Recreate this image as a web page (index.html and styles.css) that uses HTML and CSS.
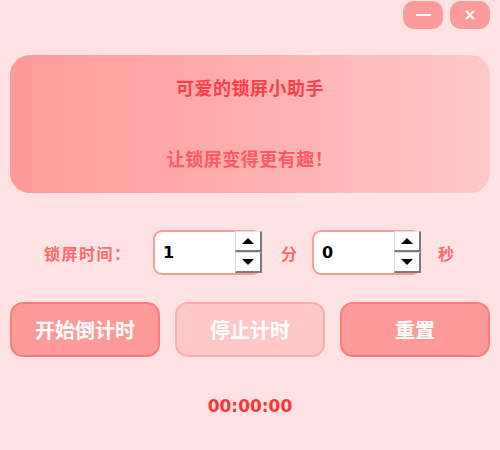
FILE: index.html
```html
<!DOCTYPE html>
<html>
<head>
<meta charset="utf-8">
<link rel="stylesheet" href="styles.css">
</head>
<body>
<div class="win">
  <div class="titlebar">
    <button class="wbtn"><span class="minus"></span></button>
    <button class="wbtn close">×</button>
  </div>
  <div class="card">
    <div class="title">可爱的锁屏小助手</div>
    <div class="sub">让锁屏变得更有趣！</div>
  </div>
  <div class="timerow">
    <span class="lbl">锁屏时间：</span>
    <div class="spin">
      <span class="val">1</span>
      <div class="arrows">
        <div class="ar up"><span></span></div>
        <div class="ar down"><span></span></div>
      </div>
    </div>
    <span class="unit u1">分</span>
    <div class="spin">
      <span class="val">0</span>
      <div class="arrows">
        <div class="ar up"><span></span></div>
        <div class="ar down"><span></span></div>
      </div>
    </div>
    <span class="unit u2">秒</span>
  </div>
  <div class="btns">
    <button class="btn">开始倒计时</button>
    <button class="btn dis">停止计时</button>
    <button class="btn">重置</button>
  </div>
  <div class="clock">00:00:00</div>
</div>
</body>
</html>
```
FILE: styles.css
```css
html, body {
  margin: 0;
  padding: 0;
  background: #ffe3e4;
  font-family: "Noto Sans CJK SC", "Noto Sans", sans-serif;
}
.win {
  width: 500px;
  height: 450px;
  box-sizing: border-box;
  padding: 0 10px;
  display: flex;
  flex-direction: column;
}
.titlebar {
  display: flex;
  justify-content: flex-end;
  gap: 7px;
  padding-top: 1px;
}
.wbtn {
  width: 40px;
  height: 28px;
  border: none;
  border-radius: 11px;
  background: #ff9a9a;
  color: #fff;
  display: flex;
  align-items: center;
  justify-content: center;
  padding: 0;
  font-family: "DejaVu Sans", sans-serif;
  font-weight: bold;
  font-size: 15px;
}
.minus {
  display: block;
  width: 15px;
  height: 2px;
  background: #fff;
}
.card {
  margin-top: 26px;
  height: 138px;
  border-radius: 20px;
  background: linear-gradient(90deg, #ff9a9a 0%, #ffaeae 50%, #ffc9c9 100%);
  display: flex;
  flex-direction: column;
  align-items: center;
  box-sizing: border-box;
  padding-top: 19px;
}
.title {
  font-size: 18px;
  letter-spacing: 0.5px;
  font-weight: bold;
  color: #ff3f4c;
  line-height: 26px;
}
.sub {
  margin-top: 45px;
  font-size: 18px;
  letter-spacing: 0.5px;
  font-weight: bold;
  color: #ff5a66;
  line-height: 26px;
}
.timerow {
  margin-top: 37px;
  display: flex;
  align-items: center;
  height: 45px;
  padding-left: 34px;
}
.lbl, .unit {
  font-size: 16px;
  font-weight: bold;
  color: #ff6b6b;
}
.lbl { width: 109px; letter-spacing: 1.5px; }
.unit { width: 17px; }
.u1 { margin: 0 14px 0 19px; }
.u2 { margin-left: 17px; }
.spin {
  width: 109px;
  height: 45px;
  box-sizing: border-box;
  border: 2px solid #ff9a9a;
  border-radius: 9px;
  background: #fff;
  display: flex;
  align-items: center;
  position: relative;
}
.val {
  font-family: "DejaVu Sans", sans-serif;
  font-weight: bold;
  font-size: 16px;
  color: #000;
  padding-left: 8px;
  flex: 1;
}
.arrows {
  width: 27px;
  height: 42px;
  margin-right: -2px;
  align-self: flex-start;
  margin-top: -1px;
  display: flex;
  flex-direction: column;
}
.ar {
  flex: 1;
  background: #fff;
  border-left: 1px solid #d8d8d8;
  border-right: 2px solid #7a7a7a;
  border-bottom: 2px solid #7a7a7a;
  border-top: 1px solid #e0e0e0;
  display: flex;
  align-items: center;
  justify-content: center;
}
.ar span {
  width: 0;
  height: 0;
  border-left: 6px solid transparent;
  border-right: 6px solid transparent;
}
.up span { border-bottom: 6px solid #000; }
.down span { border-top: 6px solid #000; }
.btns {
  margin-top: 27px;
  display: flex;
  justify-content: space-between;
}
.btn {
  width: 150px;
  height: 55px;
  box-sizing: border-box;
  border: 2px solid #ff7b7b;
  border-radius: 13px;
  background: #ff9a9a;
  color: #fff;
  font-family: "Noto Sans CJK SC", sans-serif;
  font-weight: bold;
  font-size: 20px;
  padding: 0;
}
.btn.dis {
  background: #ffc8c8;
  border-color: #ffabab;
}
.clock {
  margin-top: 39px;
  text-align: center;
  font-family: "DejaVu Sans", sans-serif;
  font-weight: bold;
  font-size: 17px;
  color: #ff3535;
}
```
